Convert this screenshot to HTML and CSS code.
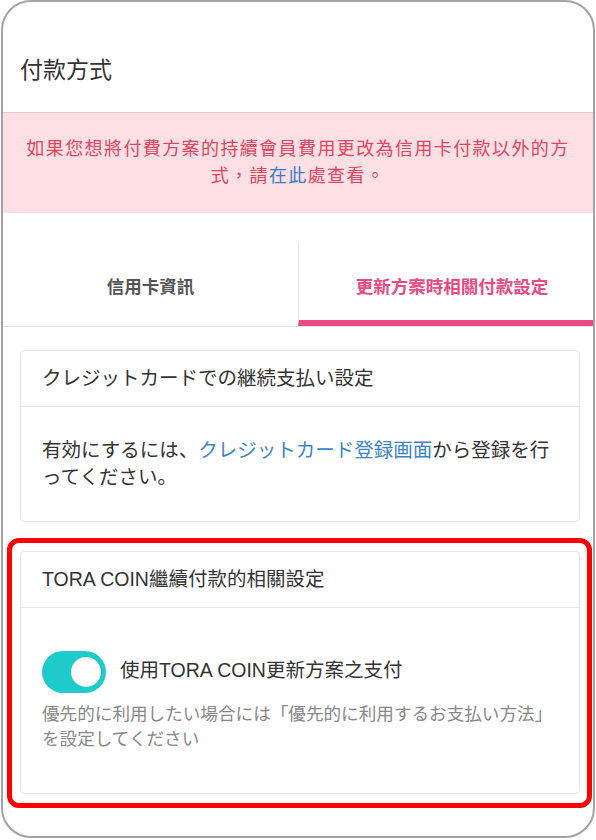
FILE: index.html
```html
<!DOCTYPE html>
<html lang="zh-Hant">
<head>
  <meta charset="UTF-8">
  <title>付款方式</title>
  <link rel="stylesheet" href="styles.css">
</head>
<body>

  <div class="frame">
    <h1 class="page-title">付款方式</h1>

    <div class="notice">
      如果您想將付費方案的持續會員費用更改為信用卡付款以外的方式，請<a href="#">在此</a>處查看。
    </div>

    <div class="tabs">
      <div class="tab">信用卡資訊</div>
      <div class="tab active">更新方案時相關付款設定</div>
    </div>

    <div class="card card-plain" lang="ja">
      <div class="card-head">クレジットカードでの継続支払い設定</div>
      <div class="card-body">
        有効にするには、<a href="#">クレジットカード登録画面</a>から登録を行ってください。
      </div>
    </div>

    <div class="highlight">
      <div class="card">
        <div class="card-head">TORA COIN繼續付款的相關設定</div>
        <div class="card-body coin-body">
          <label class="switch-row">
            <span class="switch on"><span class="knob"></span></span>
            <span class="switch-label">使用TORA COIN更新方案之支付</span>
          </label>
          <p class="hint" lang="ja">優先的に利用したい場合には「優先的に利用するお支払い方法」を設定してください</p>
        </div>
      </div>
    </div>
  </div>

</body>
</html>
```

FILE: styles.css
```css
body { margin: 0; background: #fff; font-family: "Liberation Sans", "Noto Sans CJK TC", "Noto Sans CJK JP", sans-serif; color: #333; }
[lang="ja"] { font-family: "Liberation Sans", "Noto Sans CJK JP", sans-serif; }

.frame { box-sizing: border-box; width: 594px; height: 838px; margin-left: 1px; border: 2px solid #a3a3a3; border-radius: 30px; overflow: hidden; }

.page-title { margin: 0; height: 110px; display: flex; align-items: center; padding: 22px 0 0 17px; box-sizing: border-box; font-size: 23px; font-weight: normal; color: #333; }

.notice { border-top: 1px solid #f0c6cd; background: #fddfe4; color: #e0475f; font-size: 18px; letter-spacing: 1.4px; line-height: 27px; text-align: center; padding: 23px 20px 23px; }
.notice a { color: #3b7cc4; text-decoration: none; }

.tabs { display: flex; padding-top: 29px; border-bottom: 1px solid #e4e4e4; }
.tab { width: 50%; height: 84px; display: flex; align-items: center; justify-content: center; box-sizing: border-box; font-size: 17.5px; font-weight: bold; color: #555; padding-top: 2px; }
.tab.active { border-left: 1px solid #e8e8e8; border-bottom: 6px solid #e84a82; color: #ec4a82; padding: 8px 0 0 12px; }

.card { border: 1px solid #e6e6e6; border-radius: 4px; background: #fff; }
.card-plain { margin: 23px 13px 0 17px; }
.card-head { padding: 14px 21px 14px; font-size: 19.5px; line-height: 27px; border-bottom: 1px solid #e6e6e6; color: #333; }
.card-body { padding: 30px 21px 30px; font-size: 19.5px; line-height: 27px; color: #333; }
.card-body a { color: #3b85c8; text-decoration: none; }

.highlight { margin: 16px 1px 0 4px; border: 5px solid #ff0000; border-radius: 12px; padding: 8px 7px 9px 8px; }

.coin-body { padding: 43px 21px 41px; }
.switch-row { display: flex; align-items: center; gap: 14px; }
.switch { position: relative; width: 64px; height: 42px; border-radius: 21px; background: #e0e0e0; flex-shrink: 0; }
.switch.on { background: #1ecbcb; }
.knob { position: absolute; top: 6px; right: 5px; width: 30px; height: 30px; border-radius: 50%; background: #fff; }
.switch-label { font-size: 19.5px; color: #333; margin-top: -4px; }
.hint { margin: 9px 0 0; font-size: 17.6px; line-height: 25px; color: #888; }
```
